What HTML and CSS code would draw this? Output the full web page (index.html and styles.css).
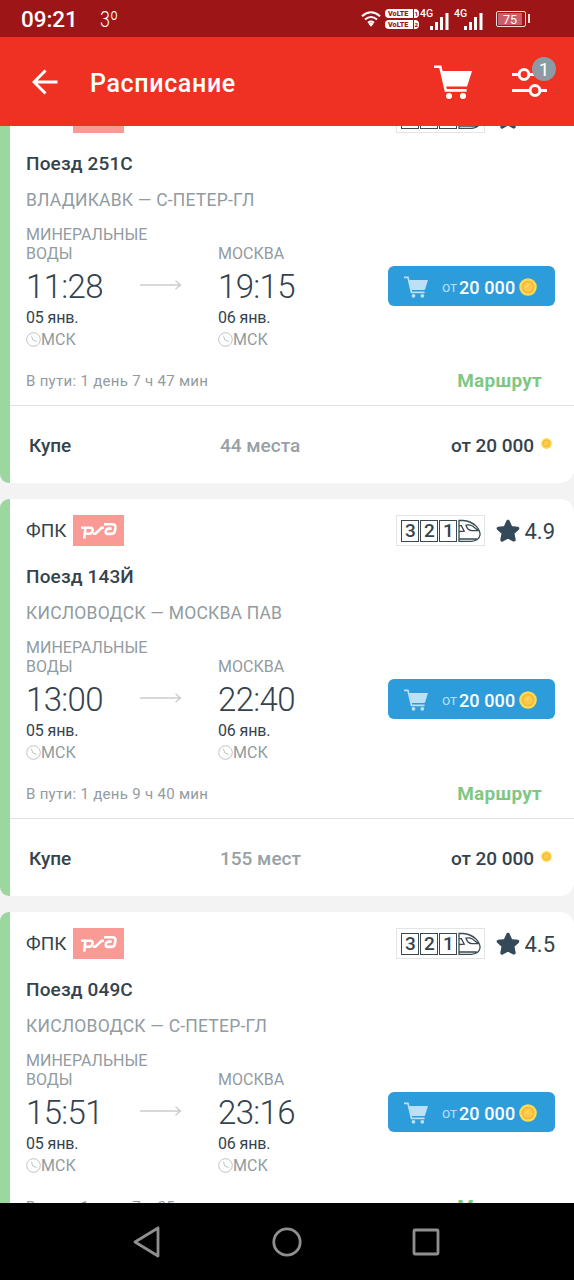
FILE: index.html
```
<!DOCTYPE html>
<html lang="ru">
<head>
<meta charset="utf-8">
<title>Расписание</title>
<link rel="stylesheet" href="styles.css">
</head>
<body>
<svg class="defs" width="0" height="0" aria-hidden="true">
  <symbol id="cart" viewBox="0 0 38 34">
    <path d="M0 1.8H6.3L11.8 25.4H32.6" fill="none" stroke="currentColor" stroke-width="2.6"/>
    <path d="M8 6H38L33.4 20.4Q33 21.6 31.8 21.6H11.8Z" fill="currentColor"/>
    <circle cx="15" cy="31" r="3" fill="currentColor"/><circle cx="29" cy="31" r="3" fill="currentColor"/>
  </symbol>
  <symbol id="coin" viewBox="0 0 18 18">
    <circle cx="9" cy="9" r="8.8" fill="#fbdc50"/>
    <circle cx="9" cy="9" r="5.6" fill="#fcc94a" stroke="#f8b03c" stroke-width="1.4"/>
    <path d="M6.5 9.3L9.8 6.4" stroke="#fbdc70" stroke-width="1.3"/>
  </symbol>
  <symbol id="arrow" viewBox="0 0 42 12">
    <path d="M0 6H40.5M35.5 1.8L40.5 6L35.5 10.2" fill="none" stroke="#c9cccd" stroke-width="1.3"/>
  </symbol>
  <symbol id="clock" viewBox="0 0 15 15">
    <circle cx="7.5" cy="7.5" r="6.8" fill="none" stroke="#b8bcbe" stroke-width=".9"/>
    <path d="M5.4 3.6L6.8 8L10.8 9.4" fill="none" stroke="#b8bcbe" stroke-width=".9"/>
  </symbol>
  <symbol id="star" viewBox="0 0 24 24">
    <path d="M12 2.4L14.9 8.6L21.6 9.4L16.7 14.1L18 20.9L12 17.7L6 20.9L7.3 14.1L2.4 9.4L9.1 8.6Z" fill="#34495a" stroke="#34495a" stroke-width="3.4" stroke-linejoin="round"/>
  </symbol>
  <symbol id="rzd" viewBox="0 0 51 31">
    <rect width="51" height="31" fill="#f99a95"/>
    <g fill="none" stroke="#fff" stroke-width="2.6">
      <path d="M8 12.8H12.4L11.2 23.6M12 12.8H17.6Q20 12.8 19.5 15.8Q19 18.8 16.4 18.8H12.5"/>
      <path d="M20 18.8H22.4L28.6 12.8H31"/>
      <path d="M31 9.3H39Q43 9.3 42.4 13L41.8 16.2Q41.2 18.9 38.2 18.9H34.6Q32.4 18.9 32.8 16.2Q33.3 13.6 35.8 13.6H38.6"/>
    </g>
  </symbol>
  <symbol id="loco" viewBox="0 0 23 24">
    <g fill="none" stroke="#3b4a52" stroke-width="1.3">
      <path d="M1 1.5H5Q13 2 18.4 7.4Q22.3 11.6 22 16Q21 22 13 22.3H1ZM1 20H18.8M1 12.5L6.2 12.2L3.4 6.6H1M8 6.2Q11 5.2 14.5 7L20.4 11.7H14Q9.5 11.4 8 6.2Z"/>
    </g>
  </symbol>
</svg>

<div class="phone">
  <div class="status">
    <span class="status-time">09:21</span><span class="status-temp">3º</span>
    <div class="status-icons">
      <svg class="wifi" viewBox="0 0 20 16"><g fill="none" stroke="#fff" stroke-width="2"><path d="M1 5.2Q10-2.6 19 5.2M4 8.6Q10 3.3 16 8.6M7 11.7Q10 9.3 13 11.7"/></g><path d="M7.4 12.8Q10 10.9 12.6 12.8L10 15.8Z" fill="#fff"/></svg>
      <div class="volte"><span>VoLTE<i>1</i></span><span>VoLTE<i>2</i></span></div>
      <div class="signal"><b>4G</b><svg viewBox="0 0 20 18"><path d="M1 14H4V18H1ZM6 10H9V18H6ZM11 5H14V18H11ZM16.5 1H19.5V18H16.5Z" fill="#fff"/></svg></div>
      <div class="signal"><b>4G</b><svg viewBox="0 0 20 18"><path d="M1 14H4V18H1ZM6 10H9V18H6ZM11 5H14V18H11ZM16.5 1H19.5V18H16.5Z" fill="#fff"/></svg></div>
      <div class="battery"><span>75</span></div>
    </div>
  </div>

  <header class="bar">
    <svg class="back" viewBox="0 0 26 26"><path d="M25.5 13H2M13.5 1.5L2 13L13.5 24.5" fill="none" stroke="#fff" stroke-width="3"/></svg>
    <h1>Расписание</h1>
    <svg class="bar-cart"><use href="#cart"/></svg>
    <div class="filter">
      <svg viewBox="0 0 36 29"><g fill="none" stroke="#fff" stroke-width="3"><path d="M0 6.5H7.5M16.5 6.5H36M0 22.5H18M28 22.5H35"/><circle cx="12" cy="6.5" r="4.9"/><circle cx="23" cy="22.5" r="4.9"/></g></svg>
      <span class="badge">1</span>
    </div>
  </header>

  <main class="list">
    <article class="card">
      <div class="head"><span class="carrier">ФПК</span><svg class="rzd"><use href="#rzd"/></svg>
        <div class="wagons"><i>3</i><i>2</i><i>1</i><svg><use href="#loco"/></svg></div><svg class="star"><use href="#star"/></svg><span class="rating">4.9</span></div>
      <h2>Поезд 251С</h2>
      <p class="route">ВЛАДИКАВК — С-ПЕТЕР-ГЛ</p>
      <div class="trip">
        <div class="stop from"><span class="station">МИНЕРАЛЬНЫЕ ВОДЫ</span><span class="time">11:28</span><span class="date">05 янв.</span><span class="zone"><svg><use href="#clock"/></svg>МСК</span></div>
        <svg class="arrow"><use href="#arrow"/></svg>
        <div class="stop"><span class="station">МОСКВА</span><span class="time">19:15</span><span class="date">06 янв.</span><span class="zone"><svg><use href="#clock"/></svg>МСК</span></div>
        <button class="buy"><svg class="buy-cart"><use href="#cart"/></svg><small>от</small><b>20 000</b><svg class="buy-coin"><use href="#coin"/></svg></button>
      </div>
      <div class="foot"><span class="duration">В пути: 1 день 7 ч 47 мин</span><a class="link">Маршрут</a></div>
      <div class="seats"><span class="kind">Купе</span><span class="count">44 места</span><span class="price">от 20 000</span><svg class="coin"><use href="#coin"/></svg></div>
    </article>

    <article class="card">
      <div class="head"><span class="carrier">ФПК</span><svg class="rzd"><use href="#rzd"/></svg>
        <div class="wagons"><i>3</i><i>2</i><i>1</i><svg><use href="#loco"/></svg></div><svg class="star"><use href="#star"/></svg><span class="rating">4.9</span></div>
      <h2>Поезд 143Й</h2>
      <p class="route">КИСЛОВОДСК — МОСКВА ПАВ</p>
      <div class="trip">
        <div class="stop from"><span class="station">МИНЕРАЛЬНЫЕ ВОДЫ</span><span class="time">13:00</span><span class="date">05 янв.</span><span class="zone"><svg><use href="#clock"/></svg>МСК</span></div>
        <svg class="arrow"><use href="#arrow"/></svg>
        <div class="stop"><span class="station">МОСКВА</span><span class="time">22:40</span><span class="date">06 янв.</span><span class="zone"><svg><use href="#clock"/></svg>МСК</span></div>
        <button class="buy"><svg class="buy-cart"><use href="#cart"/></svg><small>от</small><b>20 000</b><svg class="buy-coin"><use href="#coin"/></svg></button>
      </div>
      <div class="foot"><span class="duration">В пути: 1 день 9 ч 40 мин</span><a class="link">Маршрут</a></div>
      <div class="seats"><span class="kind">Купе</span><span class="count">155 мест</span><span class="price">от 20 000</span><svg class="coin"><use href="#coin"/></svg></div>
    </article>

    <article class="card">
      <div class="head"><span class="carrier">ФПК</span><svg class="rzd"><use href="#rzd"/></svg>
        <div class="wagons"><i>3</i><i>2</i><i>1</i><svg><use href="#loco"/></svg></div><svg class="star"><use href="#star"/></svg><span class="rating">4.5</span></div>
      <h2>Поезд 049С</h2>
      <p class="route">КИСЛОВОДСК — С-ПЕТЕР-ГЛ</p>
      <div class="trip">
        <div class="stop from"><span class="station">МИНЕРАЛЬНЫЕ ВОДЫ</span><span class="time">15:51</span><span class="date">05 янв.</span><span class="zone"><svg><use href="#clock"/></svg>МСК</span></div>
        <svg class="arrow"><use href="#arrow"/></svg>
        <div class="stop"><span class="station">МОСКВА</span><span class="time">23:16</span><span class="date">06 янв.</span><span class="zone"><svg><use href="#clock"/></svg>МСК</span></div>
        <button class="buy"><svg class="buy-cart"><use href="#cart"/></svg><small>от</small><b>20 000</b><svg class="buy-coin"><use href="#coin"/></svg></button>
      </div>
      <div class="foot"><span class="duration">В пути: 1 день 7 ч 25 мин</span><a class="link">Маршрут</a></div>
    </article>
  </main>

  <nav class="nav">
    <svg viewBox="0 0 32 32"><path d="M26 2V30L3 16Z" fill="none" stroke="#8f8f8f" stroke-width="2.8" stroke-linejoin="round"/></svg>
    <svg viewBox="0 0 32 32"><circle cx="16" cy="16" r="13.2" fill="none" stroke="#8f8f8f" stroke-width="2.8"/></svg>
    <svg viewBox="0 0 32 32"><rect x="4" y="4" width="24" height="24" rx="1" fill="none" stroke="#8f8f8f" stroke-width="2.8"/></svg>
  </nav>
</div>
</body>
</html>
```
FILE: styles.css
```
* { box-sizing: border-box; }
body { margin: 0; font-family: Roboto, "Liberation Sans", sans-serif; color: #34434d; }
svg { display: block; flex: none; }
.defs { position: absolute; }
.phone { width: 574px; height: 1280px; display: flex; flex-direction: column; overflow: hidden; background: #f3f3f3; }

.status { flex: none; height: 37px; background: #9e1518; color: #fff; display: flex; align-items: center; padding: 1px 48px 0 21px; }
.status-time { font-size: 22.5px; font-weight: 500; width: 79px; letter-spacing: -.1px; }
.status-temp { font-size: 22px; font-weight: 300; transform: scaleX(.82); transform-origin: 0 50%; }
.status-icons { margin-left: auto; display: flex; align-items: center; }
.wifi { width: 20px; height: 16px; margin-right: 4px; }
.volte { display: flex; flex-direction: column; gap: 2px; width: 34px; }
.volte span { display: flex; align-items: center; justify-content: space-between; height: 9px; border-radius: 4px; padding: 0 1px 0 3px; background: #fff; color: #9e1518; font-size: 7.2px; font-weight: 900; line-height: 9px; }
.volte i { font-style: normal; font-size: 6px; border-left: 1px solid #9e1518; padding-left: 1px; }
.signal { display: flex; width: 34px; height: 22px; align-items: flex-end; }
.signal b { align-self: flex-start; font-size: 10.5px; line-height: 12px; font-weight: 500; width: 14px; margin-right: -4px; padding-left: 1px; }
.signal svg { width: 20px; height: 18px; }
.battery { margin-left: 9px; width: 30px; height: 16px; border: 1.5px solid #f3dcdc; border-radius: 2px; padding: 1px; position: relative; }
.battery::after { content: ""; position: absolute; right: -4.5px; top: 2px; width: 2px; height: 9px; background: #f3dcdc; }
.battery span { display: block; width: 24px; height: 12px; line-height: 13px; background: #ca5d6a; font-size: 12.5px; text-indent: 5px; }

.bar { flex: none; height: 89px; background: #ef3124; display: flex; align-items: center; padding: 0 27px 0 32px; color: #fff; }
.back { width: 26px; height: 26px; }
h1 { margin: 3px auto 0 32px; font-size: 25px; font-weight: 500; letter-spacing: .65px; }
.bar-cart { width: 38px; height: 34px; margin-right: 39px; }
.filter { position: relative; }
.filter svg { width: 36px; height: 29px; margin: 2px -1px 0 1px; }
.badge { position: absolute; left: 21px; top: -9px; width: 24px; height: 24px; border-radius: 50%; background: #8b9ba3; font-size: 19px; line-height: 25px; text-align: center; }

.list { flex: 1; min-height: 0; overflow: hidden; }
.card { height: 397px; margin-bottom: 16px; background: #fff; border-left: 10px solid #9dd7a0; border-radius: 9px 14px 14px 9px; padding-top: 15px; }
.card:first-child { margin-top: -40px; }
.head { display: flex; align-items: center; height: 33px; padding: 0 19px 0 16px; }
.carrier { font-size: 19px; width: 47px; }
.rzd { width: 51px; height: 31px; }
.wagons { margin-left: auto; display: flex; align-items: center; gap: 1px; height: 31px; padding: 0 3px 0 4px; border: 1px solid #e1e5e6; }
.wagons i { width: 18px; height: 22px; border: 1.5px solid #3b4a52; font: 500 19px/20px Roboto, sans-serif; text-align: center; }
.wagons svg { width: 23px; height: 24px; }
.star { width: 24px; height: 24px; margin: 0 4px 0 11px; }
.rating { font-size: 22px; margin-top: 2px; }
h2 { margin: 16px 0 0 16px; font-size: 19px; line-height: 28px; font-weight: 500; letter-spacing: .15px; }
.route { margin: 10px 0 0 16px; font-size: 17.5px; line-height: 24px; letter-spacing: .2px; color: #929b9f; }
.trip { display: flex; align-items: flex-end; height: 139px; padding: 0 19px 0 16px; }
.stop { display: flex; flex-direction: column; width: 130px; }
.stop.from { width: 114px; }
.station { width: 125px; font-size: 16px; line-height: 18.4px; letter-spacing: .02px; color: #929b9f; }
.time { font-size: 33px; font-weight: 300; line-height: 38px; margin-top: 5px; letter-spacing: -.65px; }
.date { font-size: 16px; line-height: 20px; margin-top: 2px; letter-spacing: -.15px; }
.zone { display: flex; align-items: center; font-size: 16px; line-height: 22px; margin-top: 1px; color: #929b9f; }
.zone svg { width: 15px; height: 15px; margin-top: -2px; }
.arrow { width: 42px; height: 12px; margin: 0 36px 60px 0; }
.buy { margin: 0 0 45px auto; width: 167px; height: 40px; display: flex; align-items: center; border: 0; border-radius: 6px; padding: 1px 0 0 16px; background: #2d9cdb; color: #fff; font-family: inherit; }
.buy-cart { width: 24px; height: 22px; color: #bce0f5; }
.buy small { margin-left: 12px; font-size: 14.5px; color: #b4def5; width: 19px; padding-top: 2px; }
.buy b { font-size: 18px; font-weight: 500; letter-spacing: .1px; padding-top: 1px; }
.buy-coin { width: 18px; height: 18px; margin-left: 4px; }
.foot { display: flex; justify-content: space-between; align-items: center; height: 54px; padding: 5px 32px 0 16px; }
.duration { font-size: 15px; color: #929b9f; letter-spacing: .3px; }
.link { font-size: 19px; font-weight: 700; color: #81c784; letter-spacing: .25px; }
.seats { display: flex; align-items: center; height: 78px; border-top: 1px solid #dfe2e3; padding: 1px 22px 0 19px; font-size: 19px; font-weight: 500; }
.kind { width: 191px; }
.count { color: #98a1a6; }
.price { margin-left: auto; letter-spacing: -.05px; }
.coin { width: 11px; height: 11px; margin: -3px 0 0 7px; }

.nav { flex: none; height: 77px; background: #000; display: flex; justify-content: center; align-items: center; gap: 107px; }
.nav svg { width: 32px; height: 32px; }
```
